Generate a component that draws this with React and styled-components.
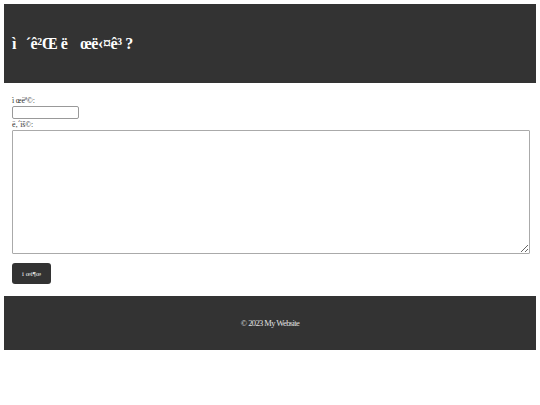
import React from "react";
import styled, { createGlobalStyle } from "styled-components";

const Global = createGlobalStyle`
  html, body { margin: 0; padding: 0; background: #fff; }
  body { padding: 4px; font-family: "Liberation Serif", "Times New Roman", serif; color: #222; }
  * { box-sizing: border-box; }
`;

const Header = styled.header`
  background: #333;
  color: #fff;
  height: 79px;
  display: flex;
  align-items: center;
  padding: 0 8px;
`;

const Title = styled.h1`
  margin: 0;
  font-size: 16px;
  letter-spacing: -0.4px;
  font-weight: bold;
  white-space: pre;
`;

const Main = styled.main`
  padding: 13px 6px 0 8px;
`;

const Form = styled.form`
  display: flex;
  flex-direction: column;
  align-items: flex-start;
`;

const Label = styled.label`
  display: block;
  font-size: 8px;
  letter-spacing: -0.2px;
  line-height: 10px;
  color: #333;
`;

const Input = styled.input`
  width: 67px;
  height: 13px;
  margin: 0 0 1px;
  padding: 0;
  border: 1px solid #999;
  border-radius: 2px;
  background: #fff;
`;

const TextArea = styled.textarea`
  width: 100%;
  height: 124px;
  margin: 0;
  padding: 0;
  border: 1px solid #aaa;
  border-radius: 1px;
  background: #fff;
  resize: vertical;
`;

const Button = styled.button`
  margin-top: 9px;
  width: 39px;
  height: 21px;
  padding: 0;
  background: #333;
  color: #eee;
  border: none;
  border-radius: 3px;
  font-family: "Liberation Serif", serif;
  font-size: 7px;
`;

const Footer = styled.footer`
  margin-top: 12px;
  background: #333;
  color: #e0e0e0;
  height: 54px;
  display: flex;
  align-items: center;
  justify-content: center;
  font-size: 8.5px;
  letter-spacing: -0.6px;
`;

export default function App() {
  return (
    <>
      <Global />
      <Header>
        <Title>{"ì\u009d´ê²Œ ë\u0090œë‹¤ê³ ?"}</Title>
      </Header>
      <Main>
        <Form onSubmit={(e) => e.preventDefault()}>
          <Label htmlFor="title">{"ì\u00a0œëª©:"}</Label>
          <Input id="title" type="text" />
          <Label htmlFor="content">{"ë‚´ìš©:"}</Label>
          <TextArea id="content" />
          <Button type="submit">{"ì\u00a0œì¶œ"}</Button>
        </Form>
      </Main>
      <Footer>© 2023 My Website</Footer>
    </>
  );
}
